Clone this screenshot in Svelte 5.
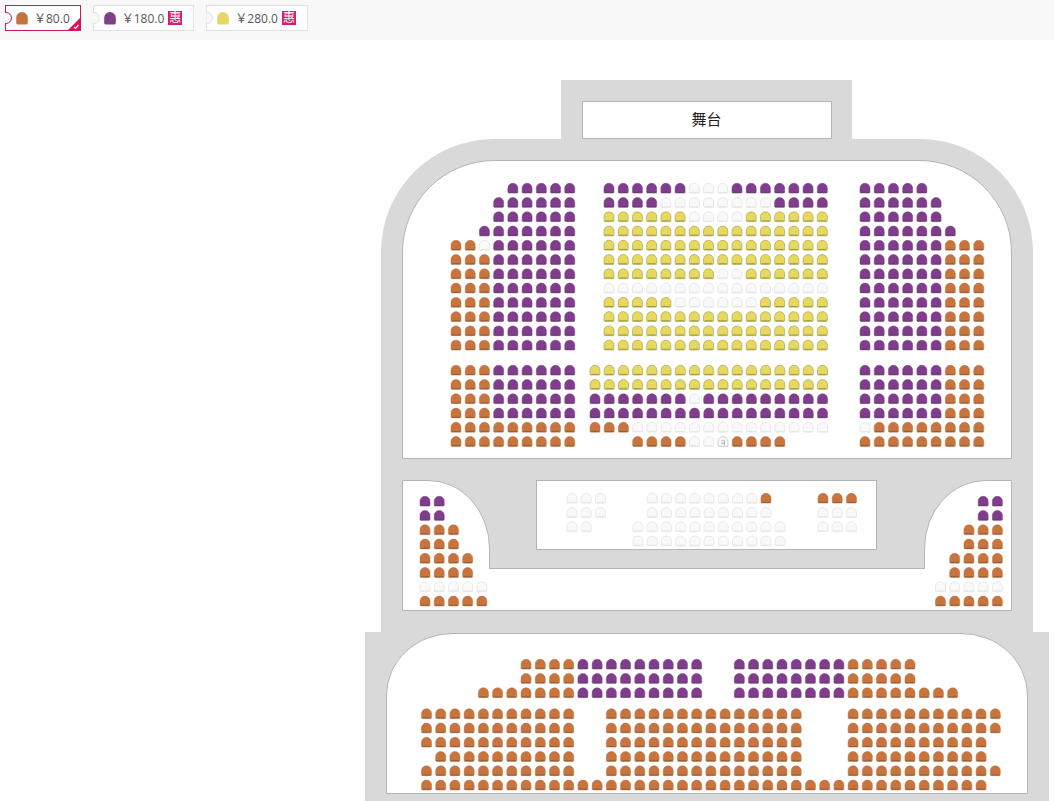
<script>
  const O9 = 'ooooooooo';
  const Y16 = 'yyyyyyyyyyyyyyyy';
  const Y17 = Y16 + 'y';
  const P17 = 'ppppppppppppppppp';
  const W16 = 'wwwwwwwwwwwwwwww';
  const MID = 'ppppppooo';
  const LEFT = 'ooopppppp';

  // each block: first seat centre + rows, one char per seat
  // o/p/y = on sale by price, w = taken, s = marked seat, . = no seat
  const blocks = [
    { x: 456, y: 188.5, rows: ['....ppppp', '...pppppp', '...pppppp', '..ppppppp', 'oowpppppp', LEFT, LEFT, LEFT, LEFT, LEFT, LEFT, LEFT] },
    { x: 609, y: 188.5, rows: ['ppppppwwwppppppp', 'ppppwwwwwwwwpppp', 'yyyyyywwwwyyyyyy', Y16, Y16, Y16, 'yyyyyyyywwyyyyyy', W16, 'yyyyywwwwwwyyyyy', Y16, Y16, Y16] },
    { x: 865, y: 188.5, rows: ['ppppp', 'pppppp', 'pppppp', 'ppppppp', MID, MID, MID, MID, MID, MID, MID, MID] },
    { x: 456, y: 370.5, rows: [LEFT, LEFT, LEFT, LEFT, O9, O9] },
    { x: 595, y: 370.5, rows: [Y17, Y17, 'pppppppwppppppppp', P17, 'ooowwwwwwwwwwwwww', '...oooowwsoooo'] },
    { x: 865, y: 370.5, rows: [MID, MID, MID, MID, 'woooooooo', O9] },
    { x: 425, y: 501.5, rows: ['pp', 'pp', 'ooo', 'ooo', 'oooo', 'oooo', 'wwwww', 'ooooo'] },
    { x: 940.5, y: 501.5, rows: ['...pp', '...pp', '..ooo', '..ooo', '.oooo', '.oooo', 'wwwww', 'ooooo'] },
    { x: 572, y: 498.5, rows: ['www', 'www', 'ww'] },
    { x: 638, y: 498.5, rows: ['.wwwwwwwwo', '.wwwwwwwww', 'wwwwwwwwwww', 'wwwwwwwwwww'] },
    { x: 823, y: 498.5, rows: ['ooo', 'www', 'www'] },
    { x: 426.5, y: 664.5, rows: [
      '.......ooooppppppppp..ppppppppooooo',
      '.......ooooppppppppp..ppppppppooooo',
      '....oooooooppppppppp..ppppppppoooooooo'
    ] },
    { x: 426.5, y: 714, rows: [
      'ooooooooooo..oooooooooooooo...ooooooooooo',
      'ooooooooooo..oooooooooooooo...ooooooooooo',
      'ooooooooooo..oooooooooooooo...oooooooooo',
      '.oooooooooo..oooooooooooooo...oooooooooo',
      'ooooooooooo..oooooooooooooo...ooooooooooo',
      'oooooooooooooooooooooooooooooooooooooooo'
    ] }
  ];

  const PITCH_X = 14.22;
  const PITCH_Y = 14.26;

  const seats = blocks.flatMap((b) =>
    b.rows.flatMap((row, r) =>
      [...row].flatMap((kind, c) =>
        kind === '.' ? [] : [{ kind, x: b.x + c * PITCH_X, y: b.y + r * PITCH_Y }]
      )
    )
  );

  const prices = [
    { kind: 'o', label: '￥80.0', on: true },
    { kind: 'p', label: '￥180.0', deal: true },
    { kind: 'y', label: '￥280.0', deal: true }
  ];

  const BODY = 'M-5 3.8V-.5a5 4.7 0 0 1 10 0V3.8a.8.8 0 0 1-.8.8h-8.4a.8.8 0 0 1-.8-.8z';
  const BAND = 'M-4 3.9h8';
  const BIG = 'M-5.8 4.6V-.8a5.8 5.6 0 0 1 11.6 0V4.6a1.4 1.4 0 0 1-1.4 1.4h-8.8a1.4 1.4 0 0 1-1.4-1.4z';
</script>

<div class="page">
  <div class="legend">
    {#each prices as p}
      <div class="ticket" class:on={p.on}>
        <svg class="legend-seat {p.kind}" viewBox="-6 -6.5 12 13" aria-hidden="true">
          <path class="big" d={BIG} />
        </svg>
        <span class="price">{p.label}</span>
        {#if p.deal}<span class="deal">惠</span>{/if}
        {#if p.on}
          <svg class="tick" viewBox="0 0 12 12" aria-hidden="true">
            <path d="M12 0V12H0z" fill="#d8145f" />
            <path d="M6 9l1.6 1.5L10.5 7" fill="none" stroke="#fff" stroke-width="1.2" />
          </svg>
        {/if}
      </div>
    {/each}
  </div>

  <svg class="map" viewBox="0 40 1054 761" width="1054" height="761">
    <rect class="wall" x="561" y="80" width="291" height="70" />
    <path class="wall" d="M381 632V252A113 113 0 0 1 494 139H920A113 113 0 0 1 1033 252V632z" />
    <rect class="wall" x="365" y="632" width="684" height="169" />

    <rect class="room" x="582.5" y="101.5" width="249" height="37" />
    <text class="stage" x="706.5" y="124.5">舞台</text>

    <path class="room" d="M402.5 458.5V252A92 92 0 0 1 494.5 160.5H919A92 92 0 0 1 1011.5 252V458.5z" />
    <path class="room" d="M402.5 480.5H428A61 68 0 0 1 489.5 548V568.5H924.5V548A61 68 0 0 1 986 480.5H1011.5V610.5H402.5z" />
    <rect class="room" x="536.5" y="480.5" width="340" height="69" />
    <path class="room" d="M386.5 793.5V695A66 62 0 0 1 453 633.5H961A66 62 0 0 1 1027.5 695V793.5z" />

    {#each seats as s}
      <g class="seat {s.kind}" transform="translate({s.x} {s.y})">
        <path class="body" d={BODY} />
        <path class="band" d={BAND} />
        {#if s.kind === 's'}<path class="mark" d="M-2 1.5h4M-1.5-1h3v4" />{/if}
      </g>
    {/each}
  </svg>
</div>

<style>
  :global(body) {
    background: #fefefe;
    overflow: hidden;
  }
  .page {
    width: 1054px;
    height: 801px;
    font-family: "Open Sans", "Noto Sans CJK SC", sans-serif;
  }
  .legend {
    display: flex;
    gap: 12px;
    height: 40px;
    box-sizing: border-box;
    padding: 5px;
    background: #f8f8f8;
  }
  .ticket {
    position: relative;
    display: flex;
    align-items: center;
    gap: 6px;
    height: 26px;
    box-sizing: border-box;
    padding: 0 10px;
    background: #fff;
    border: 1px solid #e2e2e2;
    color: #555;
    font-size: 12px;
  }
  .ticket::before {
    content: "";
    position: absolute;
    left: -6px;
    top: 6px;
    width: 10px;
    height: 10px;
    background: #f8f8f8;
    border: 1px solid #e2e2e2;
    border-radius: 50%;
    clip-path: inset(0 0 0 5px);
  }
  .ticket.on {
    border-color: #c9195f;
  }
  .ticket.on::before {
    border-color: #c9195f;
  }
  .legend-seat {
    width: 12px;
    height: 13px;
    flex: none;
  }
  .price {
    white-space: nowrap;
  }
  .deal {
    width: 14px;
    height: 14px;
    margin: 0 1px 0 -2px;
    background: #e0196a;
    color: #fff;
    font-size: 12px;
    line-height: 14px;
    text-align: center;
  }
  .tick {
    position: absolute;
    right: 0;
    bottom: 0;
    width: 12px;
    height: 12px;
  }
  .map {
    display: block;
  }
  .wall {
    fill: #d9d9d9;
  }
  .room {
    fill: #fff;
    stroke: #b4b4b4;
    stroke-width: 1;
  }
  .stage {
    fill: #222;
    font-size: 15px;
    text-anchor: middle;
  }
  .body {
    stroke-width: 0.5;
  }
  .band {
    fill: none;
    stroke-width: 1;
  }
  .big {
    stroke: none;
  }
  .o .big {
    fill: #c27440;
  }
  .p .big {
    fill: #7f3f8c;
  }
  .y .big {
    fill: #e4d965;
  }
  .o .body {
    fill: #c8743e;
    stroke: #b9703f;
  }
  .o .band {
    stroke: #8f5f40;
  }
  .p .body {
    fill: #7f3d8c;
    stroke: #7b4187;
  }
  .p .band {
    stroke: #66406f;
  }
  .y .body {
    fill: #e6d95e;
    stroke: #8f8a40;
  }
  .y .band {
    stroke: #a09a48;
  }
  .w .body,
  .s .body {
    fill: #f9f9f9;
    stroke: #d6d6da;
  }
  .w .band,
  .s .band {
    stroke: #e6e6e6;
  }
  .s .body {
    stroke: #a0a0a0;
  }
  .mark {
    fill: none;
    stroke: #999;
    stroke-width: 0.7;
  }
</style>
